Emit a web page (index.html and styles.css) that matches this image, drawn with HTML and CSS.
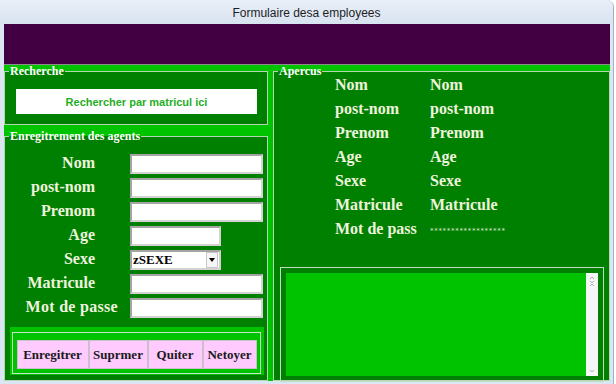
FILE: index.html
```html
<!DOCTYPE html>
<html lang="fr">
<head>
  <meta charset="UTF-8" />
  <title>Formulaire desa employees</title>
  <link rel="stylesheet" href="styles.css">
</head>
<body>

  <div class="window">
    <div class="titlebar">Formulaire desa employees</div>

    <div class="client">
      <div class="banner"></div>

      <div class="main">
        <div class="left">
          <fieldset class="box search-box">
            <legend>Recherche</legend>
            <input class="search" type="text" value="Rechercher par matricul ici" />
          </fieldset>

          <fieldset class="box agents">
            <legend>Enregitrement des agents</legend>
            <div class="form">
              <label>Nom</label>
              <input type="text" />
              <label>post-nom</label>
              <input type="text" />
              <label>Prenom</label>
              <input type="text" />
              <label>Age</label>
              <input type="text" class="short" />
              <label>Sexe</label>
              <div class="select short">
                <span>zSEXE</span>
                <span class="arrow"><svg width="6" height="4" viewBox="0 0 6 4"><path d="M0 0h6L3 4z" fill="#000"/></svg></span>
              </div>
              <label>Matricule</label>
              <input type="text" />
              <label class="wide">Mot de passe</label>
              <input type="password" />
            </div>

            <div class="actions">
              <div class="actions-inner">
                <button type="button">Enregitrer</button>
                <button type="button">Suprmer</button>
                <button type="button">Quiter</button>
                <button type="button">Netoyer</button>
              </div>
            </div>
          </fieldset>
        </div>

        <fieldset class="box preview">
          <legend>Apercus</legend>
          <div class="preview-grid">
            <span>Nom</span><span>Nom</span>
            <span>post-nom</span><span>post-nom</span>
            <span>Prenom</span><span>Prenom</span>
            <span>Age</span><span>Age</span>
            <span>Sexe</span><span>Sexe</span>
            <span>Matricule</span><span>Matricule</span>
            <span>Mot de pass</span><span class="stars">******************</span>
          </div>

          <div class="notes">
            <div class="notes-area">
              <div class="scroll">
                <svg width="12" height="20" viewBox="0 0 12 20">
                  <path d="M4 6l2-2 2 2M4 8l2 2 2-2M4 13l2-2 2 2" fill="none" stroke="#b0b0b0" stroke-width="1"/>
                </svg>
                <svg width="12" height="8" viewBox="0 0 12 8">
                  <path d="M4 2l2 2 2-2" fill="none" stroke="#b0b0b0" stroke-width="1"/>
                </svg>
              </div>
            </div>
          </div>
        </fieldset>
      </div>
    </div>
  </div>

</body>
</html>
```

FILE: styles.css
```css
:root {
  --green: #008000;
  --bright: #00c300;
  --line: #b6d4b6;
  --label: #eef3de;
  --frame: #dbe6f3;
  --pink: #ffcbff;
}

body {
  margin: 0;
  background: #fff;
  font-family: 'Liberation Serif', serif;
}

.window {
  width: 613px;
  height: 384px;
  background: var(--frame);
  border-right: 1px solid #9fb2c8;
  border-top-right-radius: 7px;
  overflow: hidden;
}

.titlebar {
  height: 24px;
  line-height: 26px;
  text-align: center;
  font-family: 'Liberation Sans', sans-serif;
  font-size: 12px;
  color: #1e1e1e;
  background: linear-gradient(#e9eff8, #d8e3f0);
}

.client {
  margin: 0 3px 0 4px;
}

.banner {
  height: 40px;
  background: #420042;
  border-bottom: 1px solid #8c8c8c;
}

.main {
  display: flex;
  gap: 5px;
  height: 316px;
  background: var(--bright);
}

.left {
  width: 264px;
  display: flex;
  flex-direction: column;
  gap: 5px;
}

.box {
  margin: 0;
  padding: 0;
  min-width: 0;
  background: var(--green);
  border: 1px solid var(--line);
}

.box legend {
  margin-left: 4px;
  padding: 0 1px;
  font-size: 12px;
  line-height: 12px;
  font-weight: bold;
  color: #fff;
}

/* recherche */
.search-box {
  height: 60px;
  box-sizing: border-box;
}

.search {
  display: block;
  box-sizing: border-box;
  width: 241px;
  height: 25px;
  margin: 12px 0 0 11px;
  border: none;
  background: #fff;
  text-align: center;
  font-family: 'Liberation Sans', sans-serif;
  font-size: 11px;
  font-weight: bold;
  color: #1fae1f;
}

/* enregistrement */
.agents {
  flex: 1;
}

.form {
  display: grid;
  grid-template-columns: 90px 133px;
  grid-auto-rows: 20px;
  column-gap: 35px;
  row-gap: 4px;
  padding-top: 12px;
}

.form label {
  text-align: right;
  font-size: 16px;
  font-weight: bold;
  line-height: 17px;
  color: var(--label);
  white-space: nowrap;
}

.form label.wide {
  margin-right: -23px;
  letter-spacing: 0.3px;
}

.form input,
.select {
  box-sizing: border-box;
  width: 133px;
  height: 20px;
  margin: 0;
  border: 2px solid;
  border-color: #a4a4a4 #d2d2d2 #d2d2d2 #a4a4a4;
  background: #fff;
}

.form .short {
  width: 91px;
}

.select {
  display: flex;
  align-items: center;
  justify-content: space-between;
  padding-left: 1px;
  font-size: 13px;
  font-weight: bold;
  color: #000;
}

.select .arrow {
  display: flex;
  align-items: center;
  justify-content: center;
  width: 12px;
  height: 16px;
  margin-right: 1px;
  border: 1px solid #c8c8c8;
  box-sizing: border-box;
  background: #f6f6f6;
}

.actions {
  width: 254px;
  box-sizing: border-box;
  margin: 9px 0 0 5px;
  padding: 5px 3px 1px 2px;
  background: var(--bright);
}

.actions-inner {
  display: grid;
  grid-template-columns: 72px 59px 55px 54px;
  justify-content: center;
  padding: 7px 0 4px;
  border: 1px solid #c9e3c9;
}

.actions button {
  height: 29px;
  padding: 0;
  border: 1px solid #cdbdcd;
  background: var(--pink);
  font-family: 'Liberation Serif', serif;
  font-size: 13px;
  font-weight: bold;
  color: #1a1a1a;
  white-space: nowrap;
}

/* apercus */
.preview {
  flex: 1;
}

.preview-grid {
  display: grid;
  grid-template-columns: 95px auto;
  margin-top: -4px;
  padding-left: 61px;
  font-size: 16px;
  font-weight: bold;
  line-height: 24px;
  color: var(--label);
}

.preview-grid .stars {
  font-family: 'DejaVu Sans', sans-serif;
  font-size: 7px;
  font-weight: normal;
  line-height: 28px;
  letter-spacing: 0.7px;
  color: #dfe8d4;
}

.notes {
  height: 115px;
  box-sizing: border-box;
  margin: 22px 5px 0 6px;
  padding: 5px;
  border: 1px solid #c4dcc4;
}

.notes-area {
  height: 100%;
  display: flex;
  justify-content: flex-end;
  background: var(--bright);
}

.scroll {
  width: 12px;
  display: flex;
  flex-direction: column;
  justify-content: space-between;
  background: #f5f6f8;
}
```
